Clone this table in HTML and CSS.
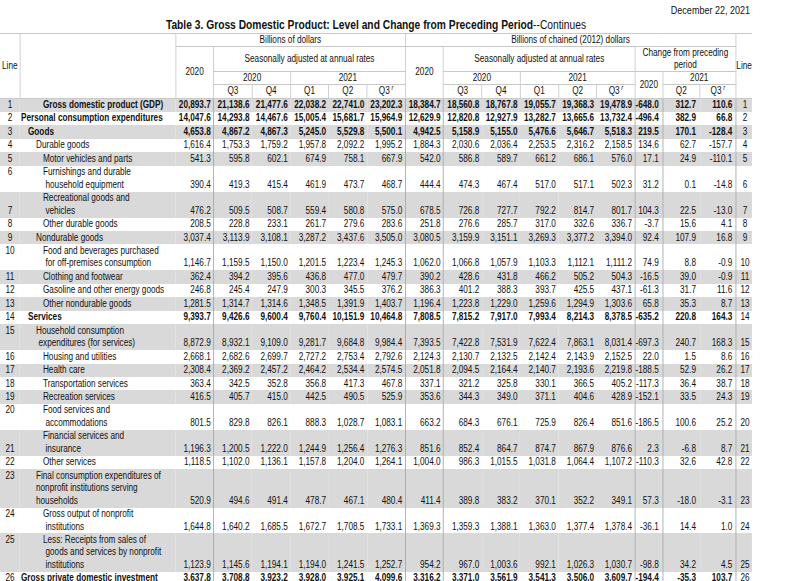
FILE: index.html
```html
<!DOCTYPE html>
<html lang="en">
<head>
<meta charset="utf-8">
<title>Table 3. Gross Domestic Product</title>
<link rel="stylesheet" href="styles.css">
</head>
<body>
<div class="page">
  <div class="date">December 22, 2021</div>
  <h1 class="title"><b>Table 3. Gross Domestic Product: Level and Change from Preceding Period</b>--Continues</h1>
  <table class="gdp">
    <colgroup>
      <col class="c-line"><col class="c-label">
      <col class="c-num"><col class="c-num"><col class="c-num"><col class="c-num"><col class="c-num"><col class="c-num">
      <col class="c-num"><col class="c-num"><col class="c-num"><col class="c-num"><col class="c-num"><col class="c-num">
      <col class="c-ch0"><col class="c-ch1"><col class="c-ch2"><col class="c-rline">
    </colgroup>
    <thead>
      <tr class="hr1">
        <th rowspan="4" class="th-line">Line</th>
        <th rowspan="4" class="th-label"></th>
        <th colspan="6">Billions of dollars</th>
        <th colspan="9">Billions of chained (2012) dollars</th>
        <th rowspan="4" class="th-rline">Line</th>
      </tr>
      <tr class="hr2">
        <th rowspan="3">2020</th>
        <th colspan="5">Seasonally adjusted at annual rates</th>
        <th rowspan="3">2020</th>
        <th colspan="5">Seasonally adjusted at annual rates</th>
        <th colspan="3" class="th-change">Change from preceding period</th>
      </tr>
      <tr class="hr3">
        <th colspan="2">2020</th><th colspan="3">2021</th>
        <th colspan="2">2020</th><th colspan="3">2021</th>
        <th rowspan="2">2020</th><th colspan="2">2021</th>
      </tr>
      <tr class="hr4">
        <th>Q3</th><th>Q4</th><th>Q1</th><th>Q2</th><th>Q3<sup class="rev">r</sup></th>
        <th>Q3</th><th>Q4</th><th>Q1</th><th>Q2</th><th>Q3<sup class="rev">r</sup></th>
        <th>Q2</th><th>Q3<sup class="rev">r</sup></th>
      </tr>
    </thead>
    <tbody>
      <tr class="bold"><td class="ln">1</td><td class="lab l3">Gross domestic product (GDP)</td><td>20,893.7</td><td>21,138.6</td><td>21,477.6</td><td>22,038.2</td><td>22,741.0</td><td>23,202.3</td><td>18,384.7</td><td>18,560.8</td><td>18,767.8</td><td>19,055.7</td><td>19,368.3</td><td>19,478.9</td><td>-648.0</td><td>312.7</td><td>110.6</td><td class="rn">1</td></tr>
      <tr class="bold"><td class="ln">2</td><td class="lab l0">Personal consumption expenditures</td><td>14,047.6</td><td>14,293.8</td><td>14,467.6</td><td>15,005.4</td><td>15,681.7</td><td>15,964.9</td><td>12,629.9</td><td>12,820.8</td><td>12,927.9</td><td>13,282.7</td><td>13,665.6</td><td>13,732.4</td><td>-496.4</td><td>382.9</td><td>66.8</td><td class="rn">2</td></tr>
      <tr class="bold"><td class="ln">3</td><td class="lab l1">Goods</td><td>4,653.8</td><td>4,867.2</td><td>4,867.3</td><td>5,245.0</td><td>5,529.8</td><td>5,500.1</td><td>4,942.5</td><td>5,158.9</td><td>5,155.0</td><td>5,476.6</td><td>5,646.7</td><td>5,518.3</td><td>219.5</td><td>170.1</td><td>-128.4</td><td class="rn">3</td></tr>
      <tr><td class="ln">4</td><td class="lab l2">Durable goods</td><td>1,616.4</td><td>1,753.3</td><td>1,759.2</td><td>1,957.8</td><td>2,092.2</td><td>1,995.2</td><td>1,884.3</td><td>2,030.6</td><td>2,036.4</td><td>2,253.5</td><td>2,316.2</td><td>2,158.5</td><td>134.6</td><td>62.7</td><td>-157.7</td><td class="rn">4</td></tr>
      <tr><td class="ln">5</td><td class="lab l3">Motor vehicles and parts</td><td>541.3</td><td>595.8</td><td>602.1</td><td>674.9</td><td>758.1</td><td>667.9</td><td>542.0</td><td>586.8</td><td>589.7</td><td>661.2</td><td>686.1</td><td>576.0</td><td>17.1</td><td>24.9</td><td>-110.1</td><td class="rn">5</td></tr>
      <tr><td class="ln">6</td><td class="lab l3 hang">Furnishings and durable<br>household equipment</td><td>390.4</td><td>419.3</td><td>415.4</td><td>461.9</td><td>473.7</td><td>468.7</td><td>444.4</td><td>474.3</td><td>467.4</td><td>517.0</td><td>517.1</td><td>502.3</td><td>31.2</td><td>0.1</td><td>-14.8</td><td class="rn">6</td></tr>
      <tr><td class="ln ln-bottom">7</td><td class="lab l3 hang">Recreational goods and<br>vehicles</td><td>476.2</td><td>509.5</td><td>508.7</td><td>559.4</td><td>580.8</td><td>575.0</td><td>678.5</td><td>726.8</td><td>727.7</td><td>792.2</td><td>814.7</td><td>801.7</td><td>104.3</td><td>22.5</td><td>-13.0</td><td class="rn">7</td></tr>
      <tr><td class="ln">8</td><td class="lab l3">Other durable goods</td><td>208.5</td><td>228.8</td><td>233.1</td><td>261.7</td><td>279.6</td><td>283.6</td><td>251.8</td><td>276.6</td><td>285.7</td><td>317.0</td><td>332.6</td><td>336.7</td><td>-3.7</td><td>15.6</td><td>4.1</td><td class="rn">8</td></tr>
      <tr><td class="ln">9</td><td class="lab l2">Nondurable goods</td><td>3,037.4</td><td>3,113.9</td><td>3,108.1</td><td>3,287.2</td><td>3,437.6</td><td>3,505.0</td><td>3,080.5</td><td>3,159.9</td><td>3,151.1</td><td>3,269.3</td><td>3,377.2</td><td>3,394.0</td><td>92.4</td><td>107.9</td><td>16.8</td><td class="rn">9</td></tr>
      <tr><td class="ln">10</td><td class="lab l3 hang">Food and beverages purchased<br>for off-premises consumption</td><td>1,146.7</td><td>1,159.5</td><td>1,150.0</td><td>1,201.5</td><td>1,223.4</td><td>1,245.3</td><td>1,062.0</td><td>1,066.8</td><td>1,057.9</td><td>1,103.3</td><td>1,112.1</td><td>1,111.2</td><td>74.9</td><td>8.8</td><td>-0.9</td><td class="rn">10</td></tr>
      <tr><td class="ln">11</td><td class="lab l3">Clothing and footwear</td><td>362.4</td><td>394.2</td><td>395.6</td><td>436.8</td><td>477.0</td><td>479.7</td><td>390.2</td><td>428.6</td><td>431.8</td><td>466.2</td><td>505.2</td><td>504.3</td><td>-16.5</td><td>39.0</td><td>-0.9</td><td class="rn">11</td></tr>
      <tr><td class="ln">12</td><td class="lab l3">Gasoline and other energy goods</td><td>246.8</td><td>245.4</td><td>247.9</td><td>300.3</td><td>345.5</td><td>376.2</td><td>386.3</td><td>401.2</td><td>388.3</td><td>393.7</td><td>425.5</td><td>437.1</td><td>-61.3</td><td>31.7</td><td>11.6</td><td class="rn">12</td></tr>
      <tr><td class="ln">13</td><td class="lab l3">Other nondurable goods</td><td>1,281.5</td><td>1,314.7</td><td>1,314.6</td><td>1,348.5</td><td>1,391.9</td><td>1,403.7</td><td>1,196.4</td><td>1,223.8</td><td>1,229.0</td><td>1,259.6</td><td>1,294.9</td><td>1,303.6</td><td>65.8</td><td>35.3</td><td>8.7</td><td class="rn">13</td></tr>
      <tr class="bold"><td class="ln">14</td><td class="lab l1">Services</td><td>9,393.7</td><td>9,426.6</td><td>9,600.4</td><td>9,760.4</td><td>10,151.9</td><td>10,464.8</td><td>7,808.5</td><td>7,815.2</td><td>7,917.0</td><td>7,993.4</td><td>8,214.3</td><td>8,378.5</td><td>-635.2</td><td>220.8</td><td>164.3</td><td class="rn">14</td></tr>
      <tr><td class="ln">15</td><td class="lab l2 hang">Household consumption<br>expenditures (for services)</td><td>8,872.9</td><td>8,932.1</td><td>9,109.0</td><td>9,281.7</td><td>9,684.8</td><td>9,984.4</td><td>7,393.5</td><td>7,422.8</td><td>7,531.9</td><td>7,622.4</td><td>7,863.1</td><td>8,031.4</td><td>-697.3</td><td>240.7</td><td>168.3</td><td class="rn">15</td></tr>
      <tr><td class="ln">16</td><td class="lab l3">Housing and utilities</td><td>2,668.1</td><td>2,682.6</td><td>2,699.7</td><td>2,727.2</td><td>2,753.4</td><td>2,792.6</td><td>2,124.3</td><td>2,130.7</td><td>2,132.5</td><td>2,142.4</td><td>2,143.9</td><td>2,152.5</td><td>22.0</td><td>1.5</td><td>8.6</td><td class="rn">16</td></tr>
      <tr><td class="ln">17</td><td class="lab l3">Health care</td><td>2,308.4</td><td>2,369.2</td><td>2,457.2</td><td>2,464.2</td><td>2,534.4</td><td>2,574.5</td><td>2,051.8</td><td>2,094.5</td><td>2,164.4</td><td>2,140.7</td><td>2,193.6</td><td>2,219.8</td><td>-188.5</td><td>52.9</td><td>26.2</td><td class="rn">17</td></tr>
      <tr><td class="ln">18</td><td class="lab l3">Transportation services</td><td>363.4</td><td>342.5</td><td>352.8</td><td>356.8</td><td>417.3</td><td>467.8</td><td>337.1</td><td>321.2</td><td>325.8</td><td>330.1</td><td>366.5</td><td>405.2</td><td>-117.3</td><td>36.4</td><td>38.7</td><td class="rn">18</td></tr>
      <tr><td class="ln">19</td><td class="lab l3">Recreation services</td><td>416.5</td><td>405.7</td><td>415.0</td><td>442.5</td><td>490.5</td><td>525.9</td><td>353.6</td><td>344.3</td><td>349.0</td><td>371.1</td><td>404.6</td><td>428.9</td><td>-152.1</td><td>33.5</td><td>24.3</td><td class="rn">19</td></tr>
      <tr><td class="ln">20</td><td class="lab l3 hang">Food services and<br>accommodations</td><td>801.5</td><td>829.8</td><td>826.1</td><td>888.3</td><td>1,028.7</td><td>1,083.1</td><td>663.2</td><td>684.3</td><td>676.1</td><td>725.9</td><td>826.4</td><td>851.6</td><td>-186.5</td><td>100.6</td><td>25.2</td><td class="rn">20</td></tr>
      <tr><td class="ln ln-bottom">21</td><td class="lab l3 hang">Financial services and<br>insurance</td><td>1,196.3</td><td>1,200.5</td><td>1,222.0</td><td>1,244.9</td><td>1,256.4</td><td>1,276.3</td><td>851.6</td><td>852.4</td><td>864.7</td><td>874.7</td><td>867.9</td><td>876.6</td><td>2.3</td><td>-6.8</td><td>8.7</td><td class="rn">21</td></tr>
      <tr><td class="ln">22</td><td class="lab l3">Other services</td><td>1,118.5</td><td>1,102.0</td><td>1,136.1</td><td>1,157.8</td><td>1,204.0</td><td>1,264.1</td><td>1,004.0</td><td>986.3</td><td>1,015.5</td><td>1,031.8</td><td>1,064.4</td><td>1,107.2</td><td>-110.3</td><td>32.6</td><td>42.8</td><td class="rn">22</td></tr>
      <tr><td class="ln">23</td><td class="lab l2">Final consumption expenditures of<br>nonprofit institutions serving<br>households</td><td>520.9</td><td>494.6</td><td>491.4</td><td>478.7</td><td>467.1</td><td>480.4</td><td>411.4</td><td>389.8</td><td>383.2</td><td>370.1</td><td>352.2</td><td>349.1</td><td>57.3</td><td>-18.0</td><td>-3.1</td><td class="rn">23</td></tr>
      <tr><td class="ln">24</td><td class="lab l3 hang">Gross output of nonprofit<br>institutions</td><td>1,644.8</td><td>1,640.2</td><td>1,685.5</td><td>1,672.7</td><td>1,708.5</td><td>1,733.1</td><td>1,369.3</td><td>1,359.3</td><td>1,388.1</td><td>1,363.0</td><td>1,377.4</td><td>1,378.4</td><td>-36.1</td><td>14.4</td><td>1.0</td><td class="rn">24</td></tr>
      <tr><td class="ln">25</td><td class="lab l3 hang">Less: Receipts from sales of<br>goods and services by nonprofit<br>institutions</td><td>1,123.9</td><td>1,145.6</td><td>1,194.1</td><td>1,194.0</td><td>1,241.5</td><td>1,252.7</td><td>954.2</td><td>967.0</td><td>1,003.6</td><td>992.1</td><td>1,026.3</td><td>1,030.7</td><td>-98.8</td><td>34.2</td><td>4.5</td><td class="rn">25</td></tr>
      <tr class="bold"><td class="ln">26</td><td class="lab l0">Gross private domestic investment</td><td>3,637.8</td><td>3,708.8</td><td>3,923.2</td><td>3,928.0</td><td>3,925.1</td><td>4,099.6</td><td>3,316.2</td><td>3,371.0</td><td>3,561.9</td><td>3,541.3</td><td>3,506.0</td><td>3,609.7</td><td>-194.4</td><td>-35.3</td><td>103.7</td><td class="rn">26</td></tr>
    </tbody>
  </table>
</div>
</body>
</html>
```

FILE: styles.css
```css
* {
  box-sizing: border-box;
}

html,
body {
  overflow: hidden;
}

body {
  margin: 0;
  background: #ffffff;
  color: #111111;
  font-family: "Liberation Sans", Arial, sans-serif;
}

/* The source table is set in Arial Narrow (Arial at ~82% width);
   the whole sheet is laid out at full width and condensed horizontally. */
.page {
  width: 917.1px;
  transform: scaleX(0.82);
  transform-origin: 0 0;
}

.date {
  height: 17px;
  padding: 3px 2.4px 0 0;
  text-align: right;
  font-size: 11px;
  line-height: 14px;
}

.title {
  margin: 0;
  height: 16px;
  text-align: center;
  font-size: 12.5px;
  line-height: 16px;
  font-weight: normal;
  white-space: nowrap;
}

.title b {
  font-weight: bold;
}

.gdp {
  width: 917.1px;
  table-layout: fixed;
  border-collapse: collapse;
  font-size: 10px;
}

.c-line { width: 24.39px; }
.c-label { width: 189.63px; }
.c-num { width: 46.71px; }
.c-ch0 { width: 33.66px; }
.c-ch1 { width: 45.49px; }
.c-ch2 { width: 43.54px; }
.c-rline { width: 19.88px; }

.gdp th {
  padding: 0;
  border: 1px solid #c8c8c8;
  font-weight: normal;
  text-align: center;
  vertical-align: middle;
  line-height: 12px;
}

.gdp .th-line {
  border-left: none;
}

.gdp .th-rline {
  border-right: none;
}

.hr1 th { height: 13px; }
.hr2 th { height: 24px; }
.hr3 th { height: 12px; }
.hr4 th { height: 13.5px; }

.th-change {
  line-height: 12px;
}

.rev {
  font-size: 7px;
  font-style: italic;
  vertical-align: 4px;
  line-height: 0;
  margin-left: 2px;
}

.gdp td {
  padding: 0.5px 3.17px 0.5px 0;
  line-height: 12.45px;
  text-align: right;
  vertical-align: bottom;
  white-space: nowrap;
}

.gdp tbody tr:nth-child(odd) td {
  background: #d9d9d9;
}

.gdp tbody td:nth-child(3),
.gdp tbody td:nth-child(8),
.gdp tbody td:nth-child(9),
.gdp tbody td:nth-child(14),
.gdp tbody td:nth-child(15),
.gdp tbody td:nth-child(17) {
  border-right: 1px solid #a3a3a3;
}

.gdp tbody td:nth-child(15) { padding-right: 4.27px; }
.gdp tbody td:nth-child(16) { padding-right: 4.88px; }
.gdp tbody td:nth-child(17) { padding-right: 3.66px; }

.bold td {
  font-weight: bold;
}

.gdp td.ln {
  padding: 0.5px 0;
  text-align: center;
  vertical-align: top;
  font-weight: normal;
}

.gdp td.ln-bottom {
  vertical-align: bottom;
}

.gdp td.rn {
  padding: 0.5px 0 0.5px 2.4px;
  text-align: center;
  vertical-align: bottom;
  font-weight: normal;
}

.gdp td.lab {
  text-align: left;
  vertical-align: top;
  padding-right: 0;
}

.gdp td.l0 { padding-left: 1.22px; }
.gdp td.l1 { padding-left: 9.76px; }
.gdp td.l2 { padding-left: 19.5px; }
.gdp td.l3 { padding-left: 28px; }
.gdp td.l2.hang { padding-left: 22.55px; text-indent: -3.05px; }
.gdp td.l3.hang { padding-left: 31.05px; text-indent: -3.05px; }
```
